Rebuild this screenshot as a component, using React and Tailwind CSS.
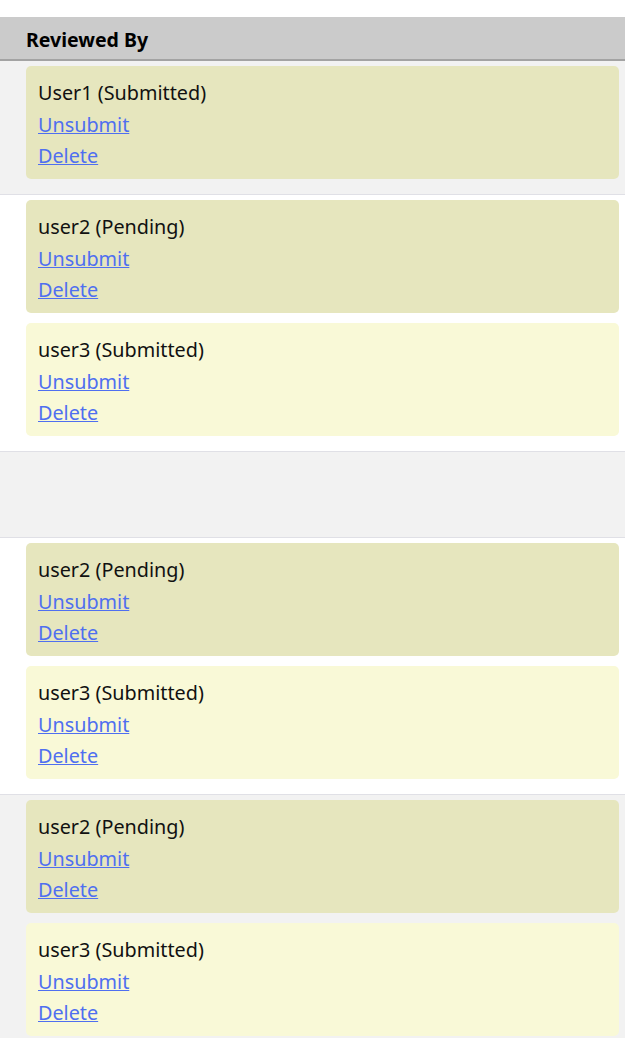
import React from "react";

const rows = [
    [{ name: "User1", status: "Submitted", tone: "pending" }],
    [
        { name: "user2", status: "Pending", tone: "pending" },
        { name: "user3", status: "Submitted", tone: "submitted" },
    ],
    [],
    [
        { name: "user2", status: "Pending", tone: "pending" },
        { name: "user3", status: "Submitted", tone: "submitted" },
    ],
    [
        { name: "user2", status: "Pending", tone: "pending" },
        { name: "user3", status: "Submitted", tone: "submitted" },
    ],
];

function ReviewerCard({ item }) {
    return (
        <div
            className={
                item.tone === "pending"
                    ? "mb-[10px] rounded-[5px] bg-[#e6e6be] px-3 pt-[11px] pb-[7.5px]"
                    : "mb-[10px] rounded-[5px] bg-[#f9f9d7] px-3 pt-[11px] pb-[7.5px]"
            }
        >
            <div className="text-[#111111]">
                {item.name} ({item.status})
            </div>
            <div>
                <a href="#" className="text-[#4f6ff0] underline">
                    Unsubmit
                </a>
            </div>
            <div>
                <a href="#" className="text-[#4f6ff0] underline">
                    Delete
                </a>
            </div>
        </div>
    );
}

export default function App() {
    return (
        <div
            className="w-[625px] bg-white pt-[17px] text-[19.8px] leading-[31.5px]"
            style={{ fontFamily: "'Noto Sans', 'Open Sans', sans-serif" }}
        >
            <div className="flex h-[44px] items-center border-b-2 border-[#a3a3a3] bg-[#cbcbcb] pl-[26px] pt-[4px]">
                <span className="text-[19.5px] font-bold text-black">Reviewed By</span>
            </div>
            {rows.map((cards, i) => (
                <div
                    key={i}
                    className={
                        (i % 2 === 0 ? "bg-[#f2f2f2]" : "bg-white") +
                        " border-b border-[#e0e0e6] pl-[26px] pr-[6px] pt-[5px] pb-[5px]" +
                        (cards.length === 0 ? " h-[86px]" : "")
                    }
                >
                    {cards.map((item, j) => (
                        <ReviewerCard key={j} item={item} />
                    ))}
                </div>
            ))}
        </div>
    );
}
